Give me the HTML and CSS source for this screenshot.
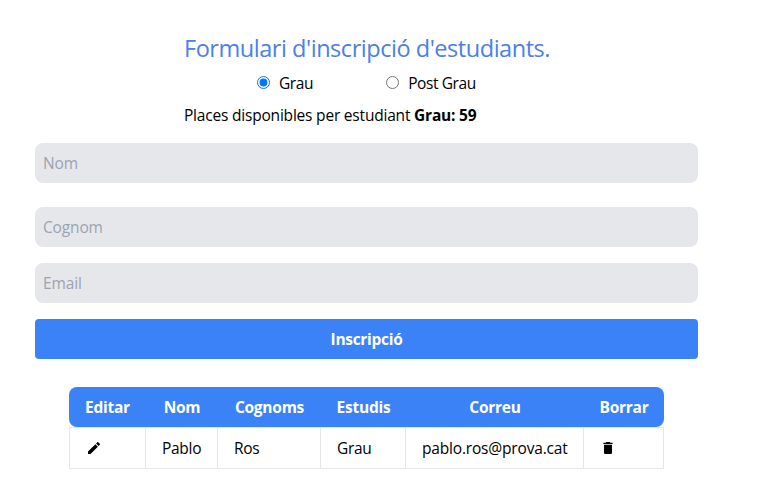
FILE: index.html
```html
<!DOCTYPE html>
<html lang="ca">
<head>
<meta charset="utf-8">
<title>Formulari d'inscripció</title>
<link rel="stylesheet" href="styles.css">
</head>
<body>
<main class="page">
  <form class="form">
    <header class="intro">
      <h1 class="title">Formulari d'inscripció d'estudiants.</h1>
      <div class="options">
        <label class="option"><input type="radio" name="estudis" checked><span>Grau</span></label>
        <label class="option"><input type="radio" name="estudis"><span>Post Grau</span></label>
      </div>
      <p class="places">Places disponibles per estudiant <b>Grau: 59</b></p>
    </header>
    <input class="field field-first" type="text" placeholder="Nom">
    <input class="field" type="text" placeholder="Cognom">
    <input class="field" type="text" placeholder="Email">
    <button class="submit" type="button">Inscripció</button>
  </form>
  <table class="students">
    <colgroup><col class="c-edit"><col class="c-name"><col class="c-surname"><col class="c-study"><col class="c-mail"><col class="c-delete"></colgroup>
    <thead>
      <tr><th>Editar</th><th>Nom</th><th>Cognoms</th><th>Estudis</th><th>Correu</th><th>Borrar</th></tr>
    </thead>
    <tbody>
      <tr>
        <td><svg class="icon" viewBox="0 0 24 24"><path d="M3 17.25V21h3.75L17.81 9.94l-3.75-3.75L3 17.25zM20.71 7.04a1 1 0 0 0 0-1.41l-2.34-2.34a1 1 0 0 0-1.41 0l-1.83 1.83 3.75 3.75 1.83-1.83z"/></svg></td>
        <td>Pablo</td><td>Ros</td><td>Grau</td><td class="mail">pablo.ros@prova.cat</td>
        <td><svg class="icon" viewBox="0 0 24 24"><path d="M6 19c0 1.100.9 2 2 2h8c1.100 0 2-.9 2-2V7H6v12zM19 4h-3.500l-1-1h-5l-1 1H5v2h14V4z"/></svg></td>
      </tr>
    </tbody>
  </table>
</main>
</body>
</html>
```
FILE: styles.css
```css
* { box-sizing: border-box; }
body {
  margin: 0;
  background: #fff;
  color: #000;
  font: 15.5px/24px "Open Sans", "Noto Sans", sans-serif;
  letter-spacing: -0.3px;
}
.page { width: 663px; margin-left: 35px; padding-top: 32px; }
.form { display: flex; flex-direction: column; }
.intro { width: 366px; margin-left: 149px; white-space: nowrap; }
.title { margin: 0; color: #4a80e8; font-size: 23.5px; font-weight: 400; line-height: 32px; letter-spacing: -0.46px; }
.options { display: flex; gap: 73px; margin: 7px 0 0 73px; letter-spacing: -0.4px; }
.option { display: flex; align-items: center; }
.option input { width: 13px; height: 13px; margin: 0 9px 1px 0; }
.places { margin: 8px 0 0; letter-spacing: -0.2px; }
.field {
  width: 100%; height: 40px; margin: 0 0 16px; padding: 8px;
  border: 0; border-radius: 8px; background: #e5e7eb;
  color: #000; font: inherit; letter-spacing: -0.15px;
}
.field::placeholder { color: #9ca3af; }
.field-first { margin: 16px 0 24px; }
.submit {
  height: 40px; padding: 0; border: 0; border-radius: 4px;
  background: #3b82f6; color: #fff; font: inherit; font-weight: 700; letter-spacing: inherit;
}
.students { width: 595px; margin: 28px 0 0 34px; table-layout: fixed; border-spacing: 0; }
.c-edit { width: 77px; }
.c-name { width: 72px; }
.c-surname { width: 103px; }
.c-study { width: 85px; }
.c-mail { width: 178px; }
.c-delete { width: 80px; }
.students th { height: 40px; padding: 0; background: #3b82f6; color: #fff; text-align: center; letter-spacing: -0.25px; }
.students th:first-child { border-radius: 8px 0 0 8px; }
.students th:last-child { border-radius: 0 8px 8px 0; }
.students td { height: 42px; padding: 0 0 0 16px; border: solid #e5e7eb; border-width: 1px 1px 1px 0; white-space: nowrap; }
.students td:first-child { border-left-width: 1px; }
.students .mail { letter-spacing: -0.18px; }
.icon { display: block; width: 16px; height: 16px; }
```
